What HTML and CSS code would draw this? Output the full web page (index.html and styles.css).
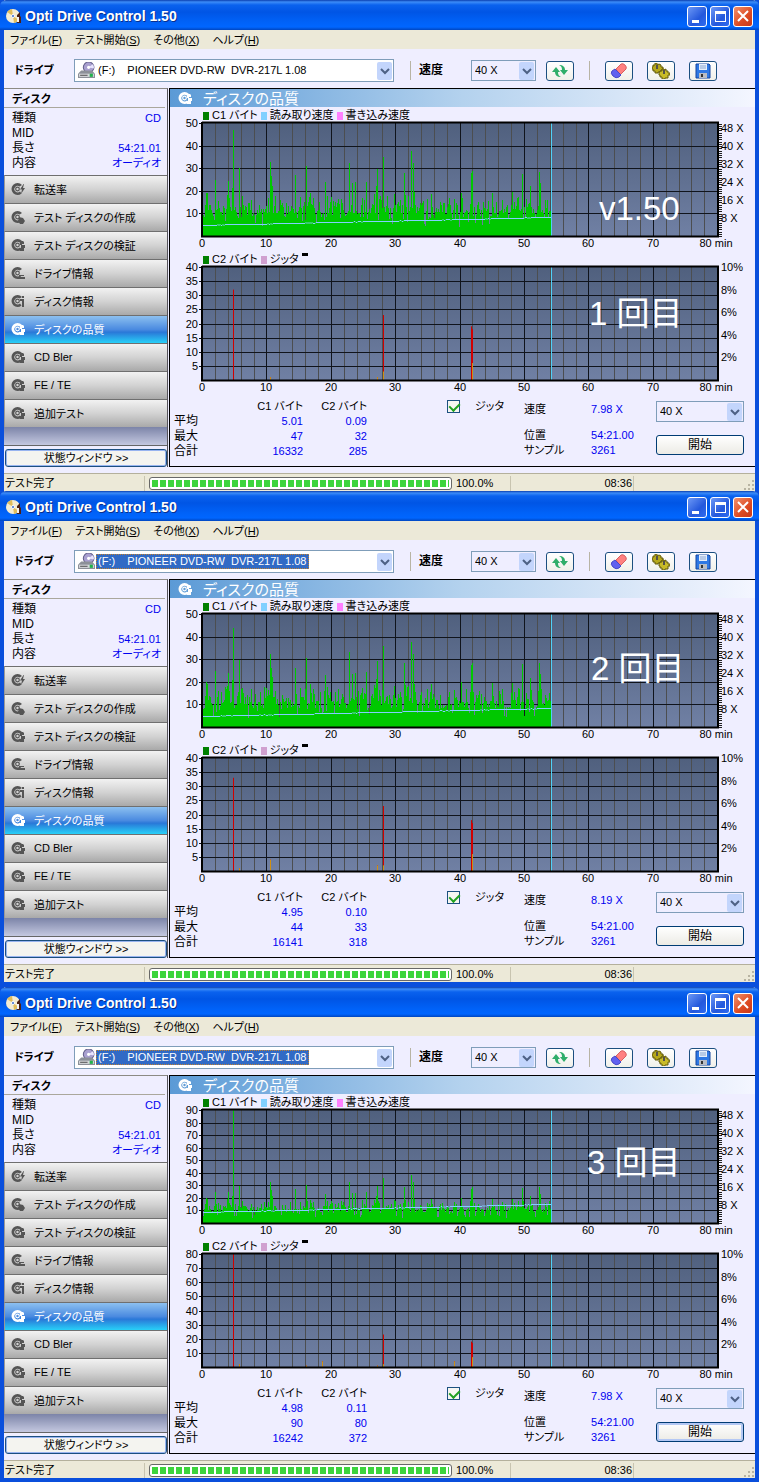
FILE: index.html
```
<!DOCTYPE html>
<html lang="ja">
<head>
    <meta charset="UTF-8">
    <meta name="viewport" content="width=device-width, initial-scale=1.0">
    <title>Opti Drive Control 1.50</title>
    <link rel="stylesheet" href="styles.css">
</head>
<body>

    <!-- Shared icons -->
    <svg class="defs" aria-hidden="true">
        <defs>
            <linearGradient id="plotBg" x1="0" y1="0" x2="0" y2="1">
                <stop offset="0" stop-color="#50607e"/>
                <stop offset="1" stop-color="#7080a4"/>
            </linearGradient>
        </defs>
        <symbol id="disc" viewBox="0 0 14 14">
            <path fill="currentColor" fill-rule="evenodd" d="M6.500 1a6 6 0 1 0 0 12a6 6 0 0 0 4-1.500L9 9.500a3.300 3.300 0 1 1-.3-5L11 3A6 6 0 0 0 6.500 1z"/>
            <circle cx="6.500" cy="7" r="1.800" fill="none" stroke="currentColor" stroke-width="1.200"/>
        </symbol>
        <symbol id="acc-bolt" viewBox="0 0 14 14"><path fill="currentColor" d="M12.500 2L9 7.500h2L10 12l4-6h-2l1-4z"/></symbol>
        <symbol id="acc-drop" viewBox="0 0 14 14"><path fill="currentColor" d="M8 7l4 1l2 3l-2 3H9l-2-3z"/></symbol>
        <symbol id="acc-dots" viewBox="0 0 14 14"><path fill="currentColor" d="M9 3h3l1 1v2h-2v1H9zM10 7h4v3h-1v3H9v-3h1z"/></symbol>
        <symbol id="acc-drive" viewBox="0 0 14 14"><path fill="currentColor" d="M8 9h5v1H8zM7 11h7v2H7z"/></symbol>
        <symbol id="acc-info" viewBox="0 0 14 14"><path fill="currentColor" d="M11 2h2v2h-2zM9 5h4v8h-2V7H9z"/></symbol>
        <symbol id="arrow" viewBox="0 0 15 18">
            <rect x="0" y="0" width="15" height="18" rx="2" fill="#c3d5fc"/>
            <path d="M4 7l4 4l4-4" fill="none" stroke="#4d6185" stroke-width="2"/>
        </symbol>
        <symbol id="app" viewBox="0 0 16 16">
            <circle cx="7" cy="8" r="7" fill="#f4ecd2"/>
            <path d="M7 8L1 4a7 7 0 0 1 5-3zM7 8l6 4a7 7 0 0 1-5 3z" fill="#e0bd5c"/>
            <circle cx="7" cy="8" r="1.500" fill="#2a61c8" stroke="#fff"/>
            <path d="M11 7l3-3v4l1 1v6h-4z" fill="#4a2016"/>
            <path d="M11 9h2v5h-2z" fill="#f3f3f3"/>
        </symbol>
        <symbol id="drive" viewBox="0 0 16 16">
            <circle cx="10" cy="5" r="5" fill="#a9a0d0" stroke="#64608c"/>
            <path d="M10 5l4-3a5 5 0 0 1 1 4z" fill="#e8e4ff"/>
            <circle cx="10" cy="5" r="1.500" fill="#fff"/>
            <path d="M3 8h10l3 3v4H0v-4z" fill="#8c9098"/>
            <path d="M1 11h14v3H1z" fill="#d6d8dc"/>
            <path d="M2 12h7v1H2z" fill="#555"/>
            <path d="M11 11h3v3h-3z" fill="#22b14c"/>
        </symbol>
        <symbol id="refresh" viewBox="0 0 16 16">
            <path d="M4 4l4 5H6c0 3 1 4 3 5c-4 0-6-2-6-5H0z" fill="#2fae6a"/>
            <path d="M12 12L8 7h2c0-3-1-4-3-5c4 0 6 2 6 5h3z" fill="#2fae6a"/>
        </symbol>
        <symbol id="eraser" viewBox="0 0 16 16">
            <path d="M5 6l5-5q2-1 4 1t1 4l-6 6z" fill="#ff8080" stroke="#d86060"/>
            <path d="M4 6l6 6l-2 2q-3 2-6-1t-1-5z" fill="#6060f0" stroke="#4848c8"/>
        </symbol>
        <symbol id="gears" viewBox="0 0 18 16">
            <path d="M1 2h2V0h2v2l2-1l2 1v2h2v3H9v2H6v1H3V8H1V6H0V4h1z" fill="#b6a81a" stroke="#625a0a"/>
            <path d="M8 8h2V6h2v1l2-1v2h2v2h2v2h-2v3h-3v1h-3v-2H8v-2H7V9h1z" fill="#c8bb28" stroke="#625a0a"/>
            <path d="M5 2v4M12 7v4" stroke="#55524a" stroke-width="2"/>
        </symbol>
        <symbol id="floppy" viewBox="0 0 16 16">
            <path d="M1 1h13l1 1v13H1z" fill="#2f78e4" stroke="#1747a0"/>
            <path d="M4 1h8v6H4z" fill="#e6eefa"/>
            <path d="M5 3h6M5 5h6" stroke="#8aa6d2"/>
            <path d="M4 10h8v5H4z" fill="#b8bcc4"/>
            <path d="M6 11h2v3H6z" fill="#333"/>
        </symbol>
    </svg>

    <main id="windows"></main>

    <script src="script.js"></script>
</body>
</html>
```
FILE: styles.css
```
/* Base */
* {
    box-sizing: border-box;
}

body {
    margin: 0;
    font-family: "Liberation Sans", "Noto Sans CJK JP", sans-serif;
    font-size: 11px;
    line-height: 15px;
    font-feature-settings: "palt";
    color: #000;
    background-color: #0a4fdc;
}

button,
select {
    font-family: inherit;
    font-size: inherit;
    font-feature-settings: inherit;
    color: inherit;
}

.defs {
    position: absolute;
    width: 0;
    height: 0;
}

svg {
    display: block;
    flex: none;
}

/* Window frame */
.window {
    display: flex;
    flex-direction: column;
    border: 4px solid #0a4fdc;
    border-top: 0;
    background-color: #efeeff;
}

.window.cut {
    border-bottom: 0;
}

.window.spaced {
    border-bottom-width: 5px;
}

.titlebar {
    display: flex;
    align-items: center;
    gap: 3px;
    height: 30px;
    margin: 0 -4px;
    padding: 2px 6px 0;
    background: linear-gradient(#0a3fb0 0, #3c8cf8 2px, #0a62ee 5px, #0055e5 12px, #0062f8 22px, #0066ff 27px, #0046c0 30px);
    border-radius: 6px 6px 0 0;
    color: #fff;
}

.titlebar h1 {
    flex: 1;
    margin: 0;
    font-size: 14px;
    text-shadow: 1px 1px #0a2f8c;
}

.title-btn {
    display: flex;
    width: 20px;
    height: 21px;
    padding: 0;
    border: 1px solid #fff;
    border-radius: 3px;
    background: linear-gradient(135deg, #6c98f6, #2458dc 60%, #2f6cf0);
}

.title-btn.close {
    background: linear-gradient(135deg, #f0906c, #dd4a22 60%, #c8381a);
}

.title-btn svg {
    width: 18px;
    height: 19px;
}

/* Menu */
.menu {
    display: flex;
    gap: 13px;
    height: 19px;
    padding: 0 6px 1px;
    background-color: #ece9d8;
}

.menu button {
    padding: 0;
    border: 0;
    background: none;
}

/* Toolbar */
.toolbar {
    display: flex;
    align-items: center;
    height: 39px;
    padding: 4px 38px 0 10px;
}

.toolbar label {
    width: 52px;
    font-size: 12px;
    font-weight: bold;
}

.toolbar .drive-label {
    width: 60px;
    font-size: 11px;
}

.combo {
    display: flex;
    align-items: center;
    height: 21px;
    padding: 0 1px;
    border: 1px solid #7f9db9;
}

.combo select {
    appearance: none;
    padding: 0 2px;
    border: 0;
    outline: 0;
    background: none;
    line-height: 15px;
    white-space: pre;
}

.combo .arrow {
    width: 15px;
    height: 18px;
    margin-left: auto;
}

.combo.drive {
    flex: 0 1 320px;
    height: 23px;
    background-color: #fff;
}

.combo.drive .icon {
    width: 17px;
    height: 17px;
    margin: 0 1px 0 2px;
}

.combo.focused select {
    background-color: #316ac5;
    color: #fff;
    outline: 1px dotted #c08030;
    outline-offset: -1px;
}

.combo.speed {
    width: 65px;
}

.divider {
    width: 1px;
    height: 19px;
    background-color: #b8b4a4;
}

.toolbar .first {
    margin: 0 8px 0 16px;
}

.toolbar .second {
    margin: 0 15px;
}

.tool-btn {
    display: flex;
    align-items: center;
    justify-content: center;
    width: 28px;
    height: 20px;
    padding: 0;
    border: 1px solid #1c4f80;
    border-radius: 3px;
    background: linear-gradient(#fff, #f0f0ea);
}

.tool-btn svg {
    width: 18px;
    height: 16px;
}

.toolbar .refresh {
    margin-left: 10px;
}

.tool-group {
    display: flex;
    gap: 14px;
}

/* Body */
.content {
    display: flex;
    gap: 1px;
    height: 379px;
}

.side {
    display: flex;
    flex-direction: column;
    flex: 0 0 164px;
    border-top: 1px solid #8c8a84;
    border-right: 1px solid #55535a;
}

.side h2 {
    height: 19px;
    margin: 0 2px 0 0;
    padding: 3px 8px 0;
    border-bottom: 1px solid #aaa79c;
    font-size: 11px;
}

.disc-info {
    width: 100%;
    margin: 3px 0 4px;
    border-spacing: 0;
}

.disc-info th,
.disc-info td {
    height: 15px;
    padding: 0 6px 0 8px;
}

th {
    font-weight: normal;
    text-align: left;
}

td {
    color: #0000f0;
    text-align: right;
}

/* Row names are mostly kanji and stand a size larger */
.disc-info th,
.totals td + th,
.totals th:first-child {
    font-size: 12px;
}

.side-btn {
    display: flex;
    align-items: center;
    gap: 9px;
    height: 28px;
    padding: 0 7px 1px 6px;
    border: 0;
    border-top: 1px solid #6f6f6f;
    border-left: 1px solid #999;
    background: linear-gradient(#f2f2f2, #d2d2d2 50%, #a9a9a9);
}

.side-btn .icon {
    width: 14px;
    height: 14px;
    color: #555;
}

.side-btn.active {
    background: linear-gradient(#8cc0f0, #4a8ae0 50%, #2a78d8 60%, #28d0f8);
    color: #fff;
}

.side-btn.active .icon {
    color: #fff;
}

.filler {
    flex: 1;
    background: linear-gradient(#7c84a8, #c4c8e0);
    border-bottom: 1px solid #666;
}

.state-btn {
    height: 18px;
    margin: 3px 0 0 1px;
    padding: 0;
    border: 1px solid #1c4f80;
    border-radius: 3px;
    background-color: #f4f4f0;
    box-shadow: inset 0 0 0 1px #98b4f0;
    line-height: 14px;
}

/* Quality panel */
.main {
    flex: 1;
    min-width: 0;
    border: solid #000;
    border-width: 1px 0 1px 1px;
}

.main h2 {
    display: flex;
    align-items: center;
    gap: 11px;
    height: 18px;
    margin: 0;
    padding: 0 8px;
    background: linear-gradient(90deg, #5b9ad6, #b4d2ee 50%, #f4f6ff);
    color: #fff;
    font-size: 15px;
    font-weight: normal;
}

.main h2 .icon {
    width: 14px;
    height: 14px;
}

.legend {
    display: flex;
    align-items: center;
    gap: 3px;
    height: 15px;
    padding: 2px 0 0 33px;
}

.swatch {
    width: 6px;
    height: 8px;
}

.c1 {
    background-color: #008000;
}

.read {
    background-color: #80d0ff;
}

.write {
    background-color: #ff80ff;
}

.jitter {
    background-color: #d0a0d0;
}

.mark {
    align-self: flex-start;
    width: 6px;
    height: 3px;
    background-color: #000;
}

.chart {
    width: 100%;
    height: auto;
    overflow: visible;
}

.chart .note {
    font-size: 33px;
    fill: #fff;
    font-feature-settings: normal;
}

/* Statistics below the charts */
.stats {
    display: flex;
    align-items: flex-start;
    padding: 4px 11px 0 4px;
}

.stats table {
    border-spacing: 0;
}

.stats th,
.stats td {
    height: 15px;
    padding: 0;
}

.totals th {
    text-align: right;
}

.totals th:first-child {
    width: 64px;
    text-align: left;
}

.totals th:nth-child(2) {
    width: 65px;
}

.totals th:nth-child(3) {
    width: 64px;
}

.jitter-check {
    display: flex;
    align-items: center;
    gap: 15px;
    margin-left: 80px;
}

.jitter-check input {
    appearance: none;
    position: relative;
    width: 13px;
    height: 13px;
    margin: 0;
    border: 1px solid #1c5180;
    background-color: #f6f6f2;
}

.jitter-check input:checked::after {
    content: "";
    position: absolute;
    left: 3px;
    top: 0;
    width: 5px;
    height: 8px;
    border: solid #21a121;
    border-width: 0 2px 2px 0;
    transform: rotate(45deg);
}

.position {
    margin: 3px auto 0 20px;
}

.position th {
    width: 67px;
}

.position td {
    text-align: left;
}

.position tr:first-child th,
.position tr:first-child td {
    height: 26px;
    padding-bottom: 11px;
}

.run {
    display: flex;
    flex-direction: column;
    gap: 13px;
    width: 88px;
    padding-top: 2px;
}

.start-btn {
    height: 20px;
    padding: 0;
    border: 1px solid #003c74;
    border-radius: 3px;
    background: linear-gradient(#fff, #ecebe5);
    font-size: 12px;
    line-height: 15px;
}

.start-btn.default {
    box-shadow: inset 0 0 0 2px #b4c8f4;
}

/* Status bar */
.status {
    display: flex;
    align-items: center;
    height: 18px;
    margin-top: 6px;
    padding-top: 1px;
    border-top: 1px solid #b4b09c;
    background-color: #ece9d8;
}

.status span {
    border-right: 1px solid #c8c4b0;
}

.status .state {
    width: 141px;
    padding-left: 1px;
}

.status progress {
    appearance: none;
    width: 303px;
    height: 13px;
    margin: 0 4px;
    padding: 2px;
    border: 1px solid #686868;
    border-radius: 3px;
    background-color: #fff;
}

.status progress::-webkit-progress-bar {
    background-color: #fff;
}

.status progress::-webkit-progress-value {
    background: repeating-linear-gradient(90deg, #3cd43c 0, #3cd43c 6px, #fff 6px, #fff 8px);
}

.status .percent {
    width: 55px;
}

.status .time {
    width: 123px;
    padding-right: 1px;
    text-align: right;
}

.status .grip {
    width: 12px;
    height: 12px;
    margin: 3px 0 0 auto;
}
```
FILE: script.js
```
// One entry per test run
const runs = [
    {
        cls: "cut", focused: false, c1Max: 50, c2Max: 40, seed: 7, peak: 47,
        c1: ["5.01", "47", "16332"], c2: ["0.09", "32", "285"], speed: "7.98 X",
        notes1: [["v1.50", 429, 98]], notes2: [["1 回目", 419, 59]],
        spikes: [[31, 32, 0], [68, 1, 1], [175, 1, 1], [181, 23, 3], [269, 19, 0], [270, 18, 6]]
    },
    {
        cls: "spaced", focused: true, c1Max: 50, c2Max: 40, seed: 19, peak: 44,
        c1: ["4.95", "44", "16141"], c2: ["0.10", "33", "318"], speed: "8.19 X",
        notes1: [["2 回目", 421, 67]], notes2: [],
        spikes: [[31, 33, 0], [37, 1, 1], [68, 4, 4], [175, 2, 2], [181, 23, 2], [269, 18, 0], [270, 17, 6]]
    },
    {
        cls: "", focused: true, c1Max: 90, c2Max: 80, seed: 31, peak: 90, isDefault: true,
        c1: ["4.98", "90", "16242"], c2: ["0.11", "80", "372"], speed: "7.98 X",
        notes1: [["3 回目", 417, 65]], notes2: [],
        spikes: [[31, 80, 0], [37, 2, 2], [104, 1, 1], [120, 4, 4], [175, 1, 1], [181, 23, 2], [252, 4, 4], [269, 18, 0], [270, 17, 7]]
    }
];

// C1 peaks shared by all runs: x offset in the plot -> error count
const peaks = {
    4: 20, 5: 20, 7: 14, 13: 25, 16: 16, 22: 13, 25: 19, 26: 25, 27: 17, 30: 22, 37: 30, 40: 18, 43: 14,
    48: 12, 56: 11, 63: 13, 66: 17, 68: 33, 69: 27, 70: 22, 72: 14, 80: 15, 87: 11, 93: 27, 98: 18,
    101: 14, 104: 31, 108: 19, 111: 17, 115: 12, 123: 24, 125: 18, 128: 16, 133: 16, 136: 17, 140: 15,
    147: 33, 150: 24, 153: 24, 160: 18, 162: 16, 164: 25, 170: 15, 172: 19, 174: 22, 175: 30, 177: 17,
    181: 36, 184: 14, 188: 13, 192: 19, 196: 15, 198: 16, 202: 29, 203: 19, 206: 18, 209: 38, 211: 33,
    212: 20, 218: 15, 225: 17, 229: 19, 238: 15, 246: 14, 252: 17, 259: 20, 265: 12, 269: 28, 270: 29,
    276: 15, 290: 20, 300: 17, 310: 20, 312: 16, 316: 18, 320: 28, 325: 13, 328: 22, 337: 29, 338: 24,
    344: 13, 348: 12
};

const X0 = 32, WIDTH = 516, TOP = 1, BOTTOM = 114, PER_MIN = 6.44, END = 350;

function rect(x, y, w, h, fill) {
    return `<rect x="${x}" y="${y}" width="${w}" height="${h}" fill="${fill}"/>`;
}

function label(x, y, text, anchor) {
    return `<text x="${x}" y="${y}" text-anchor="${anchor || "start"}">${text}</text>`;
}

function grid(max, step) {
    let out = rect(X0, TOP, WIDTH, BOTTOM - TOP, "url(#plotBg)");
    for (let m = 2; m < 80; m += 2) {
        out += rect(X0 + Math.round(m * PER_MIN), TOP, 1, BOTTOM - TOP, m % 10 ? "#4c4e50" : "#10141c");
    }
    for (let v = step; v <= max; v += step) {
        const y = Math.round(BOTTOM - v / max * (BOTTOM - TOP));
        out += rect(X0 - 3, y, v === max ? 3 : WIDTH + 3, 1, "#10141c");
        out += label(28, y + 4, v, "end");
    }
    return out;
}

function frame() {
    let out = `<path d="M32 0V114.500H548V0.500H32" fill="none" stroke="#000" stroke-width="2"/>`;
    for (let m = 0; m < 80; m += 10) {
        out += label(X0 + Math.round(m * PER_MIN), 125, m, "middle");
    }
    return out + label(546, 125, "80 min", "middle");
}

function notes(list) {
    return list.map(n => `<text class="note" x="${n[1]}" y="${n[2]}">${n[0]}</text>`).join("");
}

function c1Chart(run) {
    const scale = (BOTTOM - TOP) / run.c1Max;
    let seed = run.seed;
    const random = () => (seed = (seed * 16807) % 2147483647) / 2147483647;
    let bars = "";
    let line = "";
    for (let i = 0; i < 10; i++) random();
    for (let x = 0; x < END; x++) {
        const r = random();
        let v = 8 + random() * 4;
        if (r < 0.12) v = 4 + random() * 3;
        if (r > 0.8) v += 4;
        // a peak drags its neighbours up with it
        if (peaks[x - 1] || peaks[x + 1]) v += 2;
        if (peaks[x]) v = peaks[x] - random();
        if (x === 31) v = run.peak;
        bars += `M${X0 + x} ${BOTTOM}v${-Math.round(v * scale)}h1V${BOTTOM}z`;
        line += `${x ? "L" : "M"}${X0 + x} ${103.5 - Math.round(x / END * 8 + (random() - 0.5) * 0.4)}`;
    }
    let axis = "";
    for (let y = BOTTOM; y >= 1; y -= 2.25) {
        axis += rect(549, Math.round(y), 3, 1, "#222");
    }
    for (let v = 8; v <= 48; v += 8) {
        axis += label(551, 118 - v * 2.25, v + " X");
    }
    return `<svg class="chart" viewBox="0 0 585 129">${grid(run.c1Max, 10)}
        <path d="${bars}" fill="#00c800" shape-rendering="crispEdges"/>${rect(X0 + 349, TOP, 1, 113, "#50d0f8")}
        <path d="${line}" fill="none" stroke="#80d0ff"/>${frame()}${axis}${notes(run.notes1)}</svg>`;
}

function c2Chart(run) {
    let bars = "";
    run.spikes.forEach(([x, v, orange]) => {
        const h = v / run.c2Max * 113;
        const o = orange / run.c2Max * 113;
        bars += rect(X0 + x, BOTTOM - h, 1, h, "#d00000");
        bars += rect(X0 + x, BOTTOM - o, 1, o, "#d09010");
    });
    let axis = "";
    for (let v = 2; v <= 10; v += 2) {
        axis += label(551, Math.round(118 - v * 11.3), v + "%");
    }
    return `<svg class="chart" viewBox="0 0 585 129">${grid(run.c2Max, run.c2Max / 8)}${bars}
        ${rect(X0 + 349, TOP, 1, 113, "#50d0f8")}${frame()}${axis}${notes(run.notes2)}</svg>`;
}

function icon(id, cls) {
    return `<svg class="${cls || "icon"}" aria-hidden="true"><use href="#${id}"/></svg>`;
}

const sideItems = [
    ["転送率", "bolt"], ["テスト ディスクの作成", "drop"], ["テスト ディスクの検証", "dots"],
    ["ドライブ情報", "drive"], ["ディスク情報", "info"], ["ディスクの品質", "dots"],
    ["CD Bler", "dots"], ["FE / TE", "dots"], ["追加テスト", "dots"]
];

function discIcon(accent) {
    return `<svg class="icon" viewBox="0 0 14 14" aria-hidden="true"><use href="#disc"/><use href="#acc-${accent}"/></svg>`;
}

function windowHtml(run, n) {
    return `
    <section class="window ${run.cls}">
        <header class="titlebar">
            <svg width="16" height="16"><use href="#app"/></svg>
            <h1>Opti Drive Control 1.50</h1>
            <button class="title-btn" aria-label="最小化"><svg viewBox="0 0 18 19"><path d="M4 13h7v3H4z" fill="#fff"/></svg></button>
            <button class="title-btn" aria-label="最大化"><svg viewBox="0 0 18 19"><path d="M4 4h11v11H4zM5 7v7h9V7z" fill="#fff" fill-rule="evenodd"/></svg></button>
            <button class="title-btn close" aria-label="閉じる"><svg viewBox="0 0 18 19"><path d="M4 4l10 10M14 4L4 14" stroke="#fff" stroke-width="2"/></svg></button>
        </header>
        <nav class="menu">
            <button>ファイル(<u>F</u>)</button><button>テスト開始(<u>S</u>)</button><button>その他(<u>X</u>)</button><button>ヘルプ(<u>H</u>)</button>
        </nav>
        <div class="toolbar">
            <label class="drive-label" for="drive${n}">ドライブ</label>
            <div class="combo drive ${run.focused ? "focused" : ""}">
                ${icon("drive")}
                <select id="drive${n}"><option>(F:)&nbsp;&nbsp; &nbsp;PIONEER DVD-RW&nbsp; DVR-217L 1.08</option></select>
                ${icon("arrow", "arrow")}
            </div>
            <i class="divider first"></i>
            <label for="speed${n}">速度</label>
            <div class="combo speed"><select id="speed${n}"><option>40 X</option></select>${icon("arrow", "arrow")}</div>
            <button class="tool-btn refresh" aria-label="更新">${icon("refresh")}</button>
            <i class="divider second"></i>
            <div class="tool-group">
                <button class="tool-btn" aria-label="消去">${icon("eraser")}</button>
                <button class="tool-btn" aria-label="設定">${icon("gears")}</button>
                <button class="tool-btn" aria-label="保存">${icon("floppy")}</button>
            </div>
        </div>
        <div class="content">
            <aside class="side">
                <h2>ディスク</h2>
                <table class="disc-info">
                    <tr><th>種類</th><td>CD</td></tr>
                    <tr><th>MID</th><td></td></tr>
                    <tr><th>長さ</th><td>54:21.01</td></tr>
                    <tr><th>内容</th><td>オーディオ</td></tr>
                </table>
                ${sideItems.map((s, i) => `<button class="side-btn ${i === 5 ? "active" : ""}">${discIcon(s[1])}${s[0]}</button>`).join("")}
                <div class="filler"></div>
                <button class="state-btn">状態ウィンドウ &gt;&gt;</button>
            </aside>
            <div class="main">
                <h2>${discIcon("dots")}ディスクの品質</h2>
                <div class="legend"><i class="swatch c1"></i>C1 バイト<i class="swatch read"></i>読み取り速度<i class="swatch write"></i>書き込み速度</div>
                ${c1Chart(run)}
                <div class="legend"><i class="swatch c1"></i>C2 バイト<i class="swatch jitter"></i>ジッタ<i class="mark"></i></div>
                ${c2Chart(run)}
                <div class="stats">
                    <table class="totals">
                        <tr><th></th><th>C1 バイト</th><th>C2 バイト</th></tr>
                        ${["平均", "最大", "合計"].map((t, i) => `<tr><th>${t}</th><td>${run.c1[i]}</td><td>${run.c2[i]}</td></tr>`).join("")}
                    </table>
                    <label class="jitter-check"><input type="checkbox" checked>ジッタ</label>
                    <table class="position">
                        <tr><th>速度</th><td>${run.speed}</td></tr>
                        <tr><th>位置</th><td>54:21.00</td></tr>
                        <tr><th>サンプル</th><td>3261</td></tr>
                    </table>
                    <div class="run">
                        <div class="combo"><select aria-label="テスト速度"><option>40 X</option></select>${icon("arrow", "arrow")}</div>
                        <button class="start-btn ${run.isDefault ? "default" : ""}">開始</button>
                    </div>
                </div>
            </div>
        </div>
        <footer class="status">
            <span class="state">テスト完了</span>
            <progress value="100" max="100"></progress>
            <span class="percent">100.0%</span>
            <span class="time">08:36</span>
            <svg class="grip" viewBox="0 0 12 12"><path d="M9 1h2v2H9zM5 5h2v2H5zM9 5h2v2H9zM1 9h2v2H1zM5 9h2v2H5zM9 9h2v2H9z" fill="#b8b4a2"/></svg>
        </footer>
    </section>`;
}

document.getElementById("windows").innerHTML = runs.map(windowHtml).join("");
```
